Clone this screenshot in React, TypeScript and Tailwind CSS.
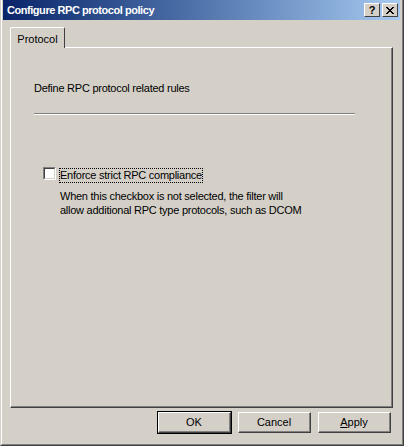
import React from 'react';

const font = "font-['Tahoma','Liberation_Sans',sans-serif]";

const Button = ({ label, isDefault, accel }: { label: string; isDefault?: boolean; accel?: string }) => (
  <div className={isDefault ? 'border border-black' : 'border border-transparent'}>
    <div className="w-[73px] h-[21px] bg-[#d4d0c8] border border-t-white border-l-white border-r-[#404040] border-b-[#404040]">
      <div className="h-full flex items-center justify-center border-r border-b border-r-[#808080] border-b-[#808080] text-[11px] text-black">
        {accel ? (
          <span>
            <span className="underline">{accel}</span>
            {label.slice(accel.length)}
          </span>
        ) : (
          label
        )}
      </div>
    </div>
  </div>
);

export default function App() {
  return (
    <div className={`w-[404px] h-[446px] bg-[#d4d0c8] ${font} overflow-hidden`}>
      <div className="h-full border-l border-l-[#d4d0c8] border-r border-r-[#404040] border-b border-b-[#404040]">
        <div className="h-full flex flex-col border-l border-l-white border-r border-r-[#808080] border-b border-b-[#808080] pl-[1px] pr-[2px] pb-[2px]">
          {/* Title bar */}
          <div className="h-[20px] shrink-0 flex items-center justify-between pl-[4px] pr-[2px] bg-gradient-to-r from-[#0a246a] to-[#a6caf0]">
            <span className="text-white font-bold text-[11px] tracking-[-0.45px]">Configure RPC protocol policy</span>
            <div className="flex items-center">
              <div className="w-[16px] h-[14px] bg-[#d4d0c8] border border-t-white border-l-white border-r-[#404040] border-b-[#404040] flex items-center justify-center text-[11px] font-bold leading-none text-black">?</div>
              <div className="w-[16px] h-[14px] ml-[2px] bg-[#d4d0c8] border border-t-white border-l-white border-r-[#404040] border-b-[#404040] flex items-center justify-center">
                <svg width="8" height="7" viewBox="0 0 8 7">
                  <path d="M0 0 L7 7 M1 0 L8 7 M7 0 L0 7 M8 0 L1 7" stroke="black" strokeWidth="1" />
                </svg>
              </div>
            </div>
          </div>

          {/* Body */}
          <div className="flex-1 flex flex-col px-[7px] pt-[7px]">
            <div className="flex">
              <div className="w-[55px] h-[21px] pt-[3px] flex justify-center border-t border-l border-t-white border-l-white border-r border-r-[#404040] rounded-tl-[2px] rounded-tr-[2px] text-[11px] text-black relative -mb-[1px] bg-[#d4d0c8] z-10">
                Protocol
              </div>
            </div>
            <div className="flex-1 border border-t-white border-l-white border-r-[#404040] border-b-[#404040]">
              <div className="h-full border-r border-b border-r-[#808080] border-b-[#808080] pl-[23px] pt-[32px] text-[11px] text-black tracking-[-0.25px]">
                <p>Define RPC protocol related rules</p>
                <div className="mt-[16px] mr-[36px] h-[2px] border-t border-t-[#808080] border-b border-b-white" />
                <div className="mt-[52px] ml-[9px] flex items-start">
                  <div className="w-[13px] h-[13px] border border-t-[#808080] border-l-[#808080] border-r-white border-b-white">
                    <div className="w-full h-full bg-white border border-t-[#404040] border-l-[#404040] border-r-[#d4d0c8] border-b-[#d4d0c8]" />
                  </div>
                  <div className="ml-[4px]">
                    <span className="outline-1 outline-dotted outline-black leading-[13px] inline-block">Enforce strict RPC compliance</span>
                    <p className="mt-[6px] leading-[14px]">
                      When this checkbox is not selected, the filter will
                      <br />
                      allow additional RPC type protocols, such as DCOM
                    </p>
                  </div>
                </div>
              </div>
            </div>
            <div className="h-[34px] shrink-0 flex items-start pt-[3px] justify-end gap-[5px] pr-[1px]">
              <Button label="OK" isDefault />
              <Button label="Cancel" />
              <Button label="Apply" accel="A" />
            </div>
          </div>
        </div>
      </div>
    </div>
  );
}
